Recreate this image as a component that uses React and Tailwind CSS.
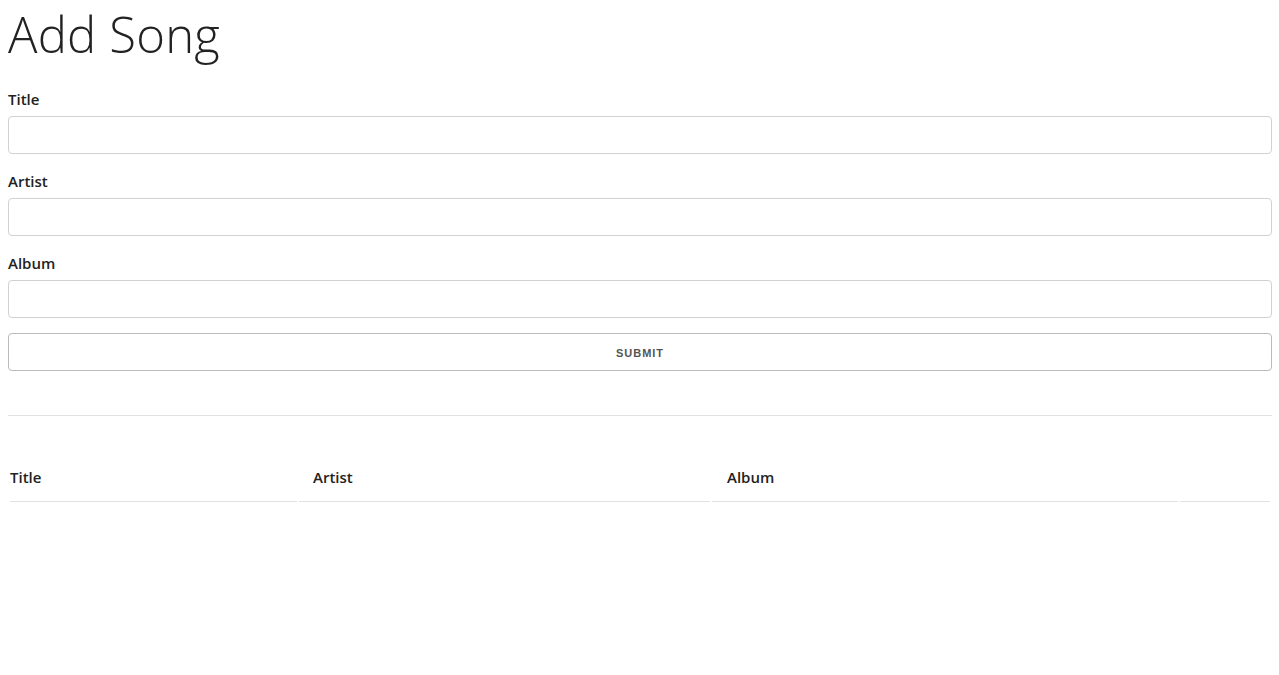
const Field = ({ label }) => (
  <div>
    <label className="block mb-[5px] text-[15px] leading-[24px] font-semibold text-[#222]">{label}</label>
    <input
      type="text"
      className="block w-full h-[38px] mb-[15px] px-[10px] border border-[#d1d1d1] rounded-[4px] bg-white outline-none"
    />
  </div>
);

const App = () => {
  return (
    <div className="min-h-[675px] bg-white pt-[8px] pl-[8px] pr-[7px] pb-[8px] font-['Open_Sans','Lato',sans-serif] text-[#222]">
      <h1 className="text-[49px] leading-[52px] font-light tracking-[0.2px] text-[#222] mb-[27px]">Add Song</h1>

      <form onSubmit={e => e.preventDefault()}>
        <Field label="Title" />
        <Field label="Artist" />
        <Field label="Album" />
        <button
          type="submit"
          className="block w-full h-[38px] pt-[3px] border border-[#bbb] rounded-[4px] bg-transparent font-['Liberation_Sans',Arial,sans-serif] text-[11px] font-bold tracking-[1px] uppercase text-[#555]"
        >
          Submit
        </button>
      </form>

      <hr className="mt-[44px] mb-[34px] border-0 border-t border-[#e1e1e1]" />

      <table className="w-full border-separate border-spacing-[2px]">
        <thead>
          <tr>
            <th className="w-[287px] pl-0 pr-[15px] pt-[13px] pb-[12px] text-left text-[15px] leading-[24px] font-semibold border-b border-[#e1e1e1]">Title</th>
            <th className="w-[411px] px-[14px] pt-[13px] pb-[12px] text-left text-[15px] leading-[24px] font-semibold border-b border-[#e1e1e1]">Artist</th>
            <th className="w-[466px] px-[15px] pt-[13px] pb-[12px] text-left text-[15px] leading-[24px] font-semibold border-b border-[#e1e1e1]">Album</th>
            <th className="pl-[15px] pr-0 pt-[13px] pb-[12px] border-b border-[#e1e1e1]"></th>
          </tr>
        </thead>
        <tbody></tbody>
      </table>
    </div>
  );
};

export default App;
